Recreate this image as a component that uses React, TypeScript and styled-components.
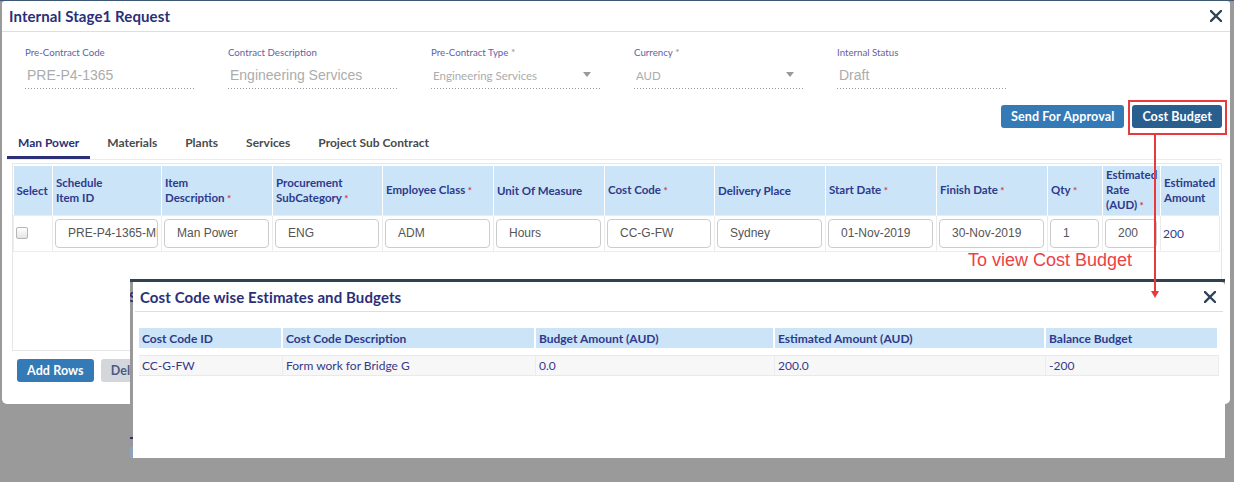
import React from "react";
import styled, { createGlobalStyle } from "styled-components";

const GlobalStyle = createGlobalStyle`
  html, body { margin: 0; padding: 0; }
  body {
    width: 1234px;
    height: 482px;
    overflow: hidden;
    background: #9a9a9a;
    font-family: Lato, "Liberation Sans", sans-serif;
  }
  * { box-sizing: border-box; }
`;

const NAVY = "#2b2f78";
const RED = "#e8393d";

const Page = styled.div`
  position: relative;
  width: 1234px;
  height: 482px;
  padding-top: 1px;
  background: #9a9a9a;
  box-shadow: inset 0 1px 0 #3d5873;
  overflow: hidden;
`;

const Modal = styled.section`
  margin-left: 2px;
  width: 1228px;
  height: 403px;
  background: #fff;
  border-radius: 3px 3px 5px 5px;
  display: flex;
  flex-direction: column;
`;

const ModalHeader = styled.header<{ $compact?: boolean }>`
  height: ${(p) => (p.$compact ? 30 : 31)}px;
  margin: ${(p) => (p.$compact ? "0 2px" : "0")};
  padding: ${(p) => (p.$compact ? "0 7px 0 5px" : "0 8px 0 7px")};
  border-bottom: 1px solid #dedede;
  display: flex;
  align-items: center;
  justify-content: space-between;
  flex-shrink: 0;
`;

const ModalTitle = styled.h2<{ $size: number }>`
  margin: 0;
  font-family: Lato, sans-serif;
  font-weight: 700;
  font-size: ${(p) => p.$size}px;
  color: ${NAVY};
  letter-spacing: 0.1px;
`;

const CloseButton = styled.button`
  border: 0;
  background: transparent;
  padding: 0;
  width: 12px;
  height: 12px;
  display: flex;
  cursor: pointer;
`;

const CloseIcon = () => (
  <svg width="12" height="12" viewBox="0 0 12 12">
    <path d="M1 1 L11 11 M11 1 L1 11" stroke="#2e4257" strokeWidth="2.3" strokeLinecap="square" />
  </svg>
);

const FieldsRow = styled.div`
  display: grid;
  grid-template-columns: repeat(5, 169px);
  column-gap: 34px;
  margin: 14px 0 0 23px;
`;

const Field = styled.div`
  display: flex;
  flex-direction: column;
`;

const FieldLabel = styled.label`
  font-family: Lato, sans-serif;
  font-size: 9.7px;
  line-height: 12px;
  height: 12px;
  color: #5f61a8;
  margin-bottom: 2px;
`;

const Req = styled.span<{ $tone?: "grey" | "red" }>`
  color: ${(p) => (p.$tone === "red" ? "#e0363a" : "#8a8a9a")};
  font-size: 10px;
`;

const FieldValue = styled.div<{ $select?: boolean }>`
  position: relative;
  height: 29px;
  padding: 1px 0 0 2px;
  display: flex;
  align-items: center;
  font-family: ${(p) => (p.$select ? "Lato, sans-serif" : '"Liberation Sans", Arial, sans-serif')};
  font-size: ${(p) => (p.$select ? 11.5 : 14)}px;
  color: #acacac;
  background-image: linear-gradient(to right, #9c9c9c 1px, transparent 1px);
  background-size: 3px 1px;
  background-repeat: repeat-x;
  background-position: left bottom;
  ${(p) =>
    p.$select
      ? `&::after {
          content: "";
          position: absolute;
          right: 9px;
          top: 12px;
          border-left: 4px solid transparent;
          border-right: 4px solid transparent;
          border-top: 5px solid #9a9a9a;
        }`
      : ""}
`;

const ActionRow = styled.div`
  display: flex;
  justify-content: flex-end;
  gap: 8px;
  margin: 16px 8px 0 0;
`;

const Button = styled.button<{ $tone: "primary" | "dark" | "muted" }>`
  height: 23px;
  padding: 0 10px;
  border: 0;
  border-radius: 3px;
  font-family: Lato, sans-serif;
  font-weight: 700;
  font-size: 12.5px;
  letter-spacing: 0.1px;
  color: ${(p) => (p.$tone === "muted" ? "#4c5988" : "#fff")};
  background: ${(p) =>
    p.$tone === "primary" ? "#337ab7" : p.$tone === "dark" ? "#285f8f" : "#d3d6db"};
  white-space: nowrap;
`;

const TabBar = styled.nav`
  display: flex;
  gap: 6px;
  height: 29px;
  margin: 3px 8px 0 5px;
  border-bottom: 1px solid #ececec;
`;

const Tab = styled.div<{ $active?: boolean }>`
  height: 28px;
  padding: 0 11px 5px;
  display: flex;
  align-items: center;
  font-family: Lato, sans-serif;
  font-weight: 700;
  font-size: 12px;
  color: ${(p) => (p.$active ? NAVY : "#4a4a4a")};
  box-shadow: ${(p) => (p.$active ? `inset 0 -3px 0 ${NAVY}` : "none")};
`;

const TableWrap = styled.div`
  margin: 3px 8px 0 10px;
  height: 188px;
  border: 1px solid #e6e6e6;
  padding-top: 2px;
  flex-shrink: 0;
`;

const Table = styled.table`
  table-layout: fixed;
  border-collapse: collapse;
  width: 1206px;
`;

const Th = styled.th`
  height: 49px;
  padding: 0 3px;
  background: #cbe4f7;
  border-right: 1px solid #fff;
  text-align: left;
  vertical-align: middle;
  font-family: Lato, sans-serif;
  font-weight: 700;
  font-size: 11.5px;
  line-height: 15px;
  color: #2e3a8c;
`;

const Td = styled.td`
  height: 36px;
  padding: 0 3px 0 2px;
  border: 1px solid #ececec;
  vertical-align: middle;
  font-family: Lato, sans-serif;
  font-size: 12px;
  color: #2e3a8c;
`;

const CellInput = styled.input`
  width: 100%;
  height: 29px;
  border: 1px solid #cccccc;
  border-radius: 4px;
  padding: 0 0 0 12px;
  font-family: "Liberation Sans", Arial, sans-serif;
  font-size: 12px;
  color: #555;
  background: #fff;
  outline: none;
`;

const CheckBox = styled.span`
  display: block;
  width: 12px;
  height: 12px;
  border: 1px solid #b5b5b5;
  border-radius: 2px;
  background: linear-gradient(#ffffff, #e4e4e4);
`;

const Footer = styled.div`
  display: flex;
  gap: 7px;
  margin: 8px 0 0 15px;
`;

/* ------------ second (overlay) dialog ------------ */

const Overlay = styled.div`
  position: absolute;
  left: 130px;
  top: 279px;
  width: 1095px;
  height: 179px;
  border-top: 3px solid #2f4254;
  background: linear-gradient(
    to bottom,
    #999 0 155px,
    #2b2f78 155px 157px,
    #999 157px 165px,
    #8ea4ba 165px
  );
  padding-left: 3px;
  z-index: 2;
  display: flex;
  overflow: hidden;
`;

const StripGlyph = styled.span`
  position: absolute;
  left: -1px;
  top: 6px;
  font-family: Lato, sans-serif;
  font-weight: 700;
  font-size: 14px;
  color: #2b2f78;
`;

const Panel = styled.div`
  position: relative;
  z-index: 1;
  flex: 1;
  background: #fff;
  border-top-right-radius: 4px;
  display: flex;
  flex-direction: column;
`;

const CostGrid = styled.div`
  display: grid;
  grid-template-columns: 144px 253px 239px 271px 173px;
  margin: 16px 0 0 6px;
  row-gap: 7px;
`;

const CostHead = styled.div`
  height: 20px;
  padding-left: 3px;
  background: #cbe4f7;
  border-right: 2px solid #fff;
  display: flex;
  align-items: center;
  font-family: Lato, sans-serif;
  font-weight: 700;
  font-size: 12px;
  color: #2e3a8c;
`;

const CostCell = styled.div`
  height: 21px;
  padding-left: 3px;
  background: #f7f7f7;
  border-top: 1px solid #e9e9e9;
  border-bottom: 1px solid #e9e9e9;
  border-right: 1px solid #ececec;
  display: flex;
  align-items: center;
  font-family: Lato, sans-serif;
  font-size: 12px;
  color: #35398a;
`;

/* ------------ annotation ------------ */

const Highlight = styled.div`
  position: absolute;
  left: 1128px;
  top: 100px;
  width: 99px;
  height: 35px;
  border: 2px solid ${RED};
  z-index: 3;
`;

const Pointer = styled.div`
  position: absolute;
  left: 1154px;
  top: 135px;
  width: 2px;
  height: 157px;
  background: ${RED};
  z-index: 3;
  &::after {
    content: "";
    position: absolute;
    left: -3px;
    bottom: -6px;
    border-left: 4px solid transparent;
    border-right: 4px solid transparent;
    border-top: 7px solid ${RED};
  }
`;

const Note = styled.div`
  position: absolute;
  left: 968px;
  top: 250px;
  font-family: "Liberation Sans", Arial, sans-serif;
  font-size: 18px;
  line-height: 20px;
  color: #ee4143;
  z-index: 3;
`;

const fields = [
  { label: "Pre-Contract Code", value: "PRE-P4-1365" },
  { label: "Contract Description", value: "Engineering Services" },
  { label: "Pre-Contract Type", value: "Engineering Services", req: true, select: true },
  { label: "Currency", value: "AUD", req: true, select: true },
  { label: "Internal Status", value: "Draft" },
];

const tabs = ["Man Power", "Materials", "Plants", "Services", "Project Sub Contract"];

const colWidths = [39, 109, 111, 110, 111, 111, 110, 111, 111, 111, 55, 58, 59];

const headers: { text: React.ReactNode; req?: boolean }[] = [
  { text: "Select" },
  { text: <>Schedule<br />Item ID</> },
  { text: <>Item<br />Description</>, req: true },
  { text: <>Procurement<br />SubCategory</>, req: true },
  { text: "Employee Class", req: true },
  { text: "Unit Of Measure" },
  { text: "Cost Code", req: true },
  { text: "Delivery Place" },
  { text: "Start Date", req: true },
  { text: "Finish Date", req: true },
  { text: "Qty", req: true },
  { text: <>Estimated<br />Rate<br />(AUD)</>, req: true },
  { text: <>Estimated<br />Amount</> },
];

const rowInputs = [
  "PRE-P4-1365-MP-01",
  "Man Power",
  "ENG",
  "ADM",
  "Hours",
  "CC-G-FW",
  "Sydney",
  "01-Nov-2019",
  "30-Nov-2019",
  "1",
  "200",
];

const costHeaders = [
  "Cost Code ID",
  "Cost Code Description",
  "Budget Amount (AUD)",
  "Estimated Amount (AUD)",
  "Balance Budget",
];
const costRow = ["CC-G-FW", "Form work for Bridge G", "0.0", "200.0", "-200"];

export default function App() {
  return (
    <>
      <GlobalStyle />
      <Page>
        <Modal>
          <ModalHeader>
            <ModalTitle $size={15}>Internal Stage1 Request</ModalTitle>
            <CloseButton aria-label="Close">
              <CloseIcon />
            </CloseButton>
          </ModalHeader>

          <FieldsRow>
            {fields.map((f) => (
              <Field key={f.label}>
                <FieldLabel>
                  {f.label}
                  {f.req && <Req> *</Req>}
                </FieldLabel>
                <FieldValue $select={f.select}>{f.value}</FieldValue>
              </Field>
            ))}
          </FieldsRow>

          <ActionRow>
            <Button $tone="primary">Send For Approval</Button>
            <Button $tone="dark">Cost Budget</Button>
          </ActionRow>

          <TabBar>
            {tabs.map((t, i) => (
              <Tab key={t} $active={i === 0}>
                {t}
              </Tab>
            ))}
          </TabBar>

          <TableWrap>
            <Table>
              <colgroup>
                {colWidths.map((w, i) => (
                  <col key={i} style={{ width: w }} />
                ))}
              </colgroup>
              <thead>
                <tr>
                  {headers.map((h, i) => (
                    <Th key={i}>
                      {h.text}
                      {h.req && <Req $tone="red"> *</Req>}
                    </Th>
                  ))}
                </tr>
              </thead>
              <tbody>
                <tr>
                  <Td>
                    <CheckBox />
                  </Td>
                  {rowInputs.map((v, i) => (
                    <Td key={i}>
                      <CellInput readOnly value={v} />
                    </Td>
                  ))}
                  <Td>200</Td>
                </tr>
              </tbody>
            </Table>
          </TableWrap>

          <Footer>
            <Button $tone="primary">Add Rows</Button>
            <Button $tone="muted">Delete Rows</Button>
          </Footer>
        </Modal>

        <Overlay>
          <StripGlyph>S</StripGlyph>
          <Panel>
            <ModalHeader $compact>
              <ModalTitle $size={15}>Cost Code wise Estimates and Budgets</ModalTitle>
              <CloseButton aria-label="Close">
                <CloseIcon />
              </CloseButton>
            </ModalHeader>
            <CostGrid>
              {costHeaders.map((h) => (
                <CostHead key={h}>{h}</CostHead>
              ))}
              {costRow.map((c, i) => (
                <CostCell key={i}>{c}</CostCell>
              ))}
            </CostGrid>
          </Panel>
        </Overlay>

        <Highlight />
        <Pointer />
        <Note>To view Cost Budget</Note>
      </Page>
    </>
  );
}
